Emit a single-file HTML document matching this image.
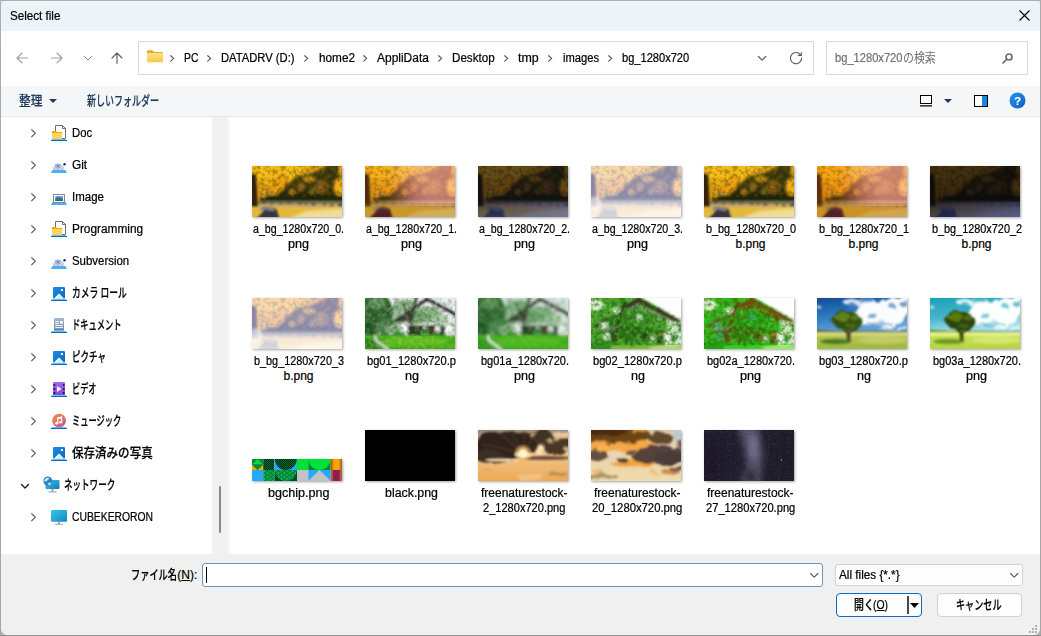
<!DOCTYPE html>
<html lang="ja">
<head>
<meta charset="utf-8">
<title>Select file</title>
<style>
*{box-sizing:border-box;margin:0;padding:0}
html,body{width:1041px;height:636px;overflow:hidden;background:#a6a6a6}
body{background:linear-gradient(#adadad,#a6a6a6 50%,#a6a6a6 99.8%,#909090 99.85%)}
#under{position:absolute;left:1px;top:1px;width:1039px;height:634px;background:linear-gradient(#e8e8e8,#e8e8e8 50%,#b4b4b4 50%)}
body{font-family:"Liberation Sans","Noto Sans CJK JP",sans-serif;font-size:12px;color:#000;position:relative}
#win{position:absolute;left:1px;top:1px;width:1039px;height:634px;background:#fff;border-radius:7px;overflow:hidden}
#title{position:absolute;left:0;top:0;width:1039px;height:30px;background:#ebf4f8;border-top:1px solid #f0fbfd}
#tool{position:absolute;left:0;top:85px;width:1039px;height:31px;background:#f4f6f8;border-bottom:1px solid #e6e6e6}
#nav{position:absolute;left:0;top:116px;width:211px;height:437px;background:#fff}
#split{position:absolute;left:211px;top:116px;width:16px;height:437px;background:#f0f0f0}
#split i{position:absolute;left:7px;top:369px;width:2px;height:47px;background:#8a8a8a;border-radius:1px}
#content{position:absolute;left:227px;top:116px;width:812px;height:437px;background:#fff;border-left:3px solid #fafafa}
#foot{position:absolute;left:0;top:553px;width:1039px;height:81px;background:#f0f0f0;border-bottom:1px solid #f5f5f5}
.txt{position:absolute;white-space:nowrap;line-height:14px;font-size:12px;transform-origin:0 0;display:block;-webkit-text-stroke:0.22px currentColor}
.box{position:absolute;background:#fff;border:1px solid #d9d9d9}
svg{position:absolute;overflow:visible}
.th{position:absolute;width:90px;height:51px;box-shadow:1px 1px 2.5px rgba(0,0,0,.36)}
.th{overflow:hidden;isolation:isolate}.th svg{left:0;top:0;overflow:hidden}
.btn{position:absolute;background:#fdfdfd;border:1px solid #d0d0d0;border-radius:4px}
u{text-decoration:underline}
.cj{font-size:13px}
</style>
</head>
<body>
<div id="under"></div>
<div id="win">
<svg width="0" height="0" style="position:absolute"><defs>
<filter id="b1" x="-20%" y="-20%" width="140%" height="140%"><feGaussianBlur stdDeviation="0.8"/></filter>
<filter id="b2" x="-20%" y="-20%" width="140%" height="140%"><feGaussianBlur stdDeviation="1.6"/></filter>
<filter id="b3" x="-30%" y="-30%" width="160%" height="160%"><feGaussianBlur stdDeviation="3"/></filter>
<filter id="b5" x="-40%" y="-40%" width="180%" height="180%"><feGaussianBlur stdDeviation="5"/></filter>
<filter id="c2" x="-20%" y="-20%" width="140%" height="140%"><feTurbulence type="fractalNoise" baseFrequency="0.07" numOctaves="3" seed="11" result="n"/><feDisplacementMap in="SourceGraphic" in2="n" scale="9" xChannelSelector="R" yChannelSelector="G"/><feGaussianBlur stdDeviation="0.9"/></filter>
<filter id="c3" x="-20%" y="-20%" width="140%" height="140%"><feTurbulence type="fractalNoise" baseFrequency="0.06" numOctaves="3" seed="5" result="n"/><feDisplacementMap in="SourceGraphic" in2="n" scale="12" xChannelSelector="G" yChannelSelector="R"/><feGaussianBlur stdDeviation="1.3"/></filter>
<filter id="leaf" x="0" y="0" width="100%" height="100%"><feTurbulence type="fractalNoise" baseFrequency="0.2" numOctaves="3" seed="7" result="n"/><feColorMatrix in="n" type="matrix" values="0 0 0 0 0  0 0 0 0 0  0 0 0 0 0  3.2 0 0 0 -1.35" result="a"/><feComposite in="SourceGraphic" in2="a" operator="in"/></filter>
<filter id="leaf2" x="0" y="0" width="100%" height="100%"><feTurbulence type="fractalNoise" baseFrequency="0.24" numOctaves="3" seed="23" result="n"/><feColorMatrix in="n" type="matrix" values="0 0 0 0 0  0 0 0 0 0  0 0 0 0 0  0 3.4 0 0 -1.45" result="a"/><feComposite in="SourceGraphic" in2="a" operator="in"/></filter>
<filter id="stars" x="0" y="0" width="100%" height="100%"><feTurbulence type="fractalNoise" baseFrequency="0.9" numOctaves="1" seed="3" result="n"/><feColorMatrix in="n" type="matrix" values="0 0 0 0 0.75  0 0 0 0 0.75  0 0 0 0 0.9  0 0 3 0 -1.75"/></filter>
<linearGradient id="aground" x1="0" y1="0" x2="1" y2="1"><stop offset="0" stop-color="#e6b228"/><stop offset="1" stop-color="#ecd47c"/></linearGradient>
<linearGradient id="a1s" x1="0" y1="0" x2="1" y2="0"><stop offset="0.2" stop-color="#000000"/><stop offset="0.55" stop-color="#7a2a3c"/><stop offset="1" stop-color="#8a3444"/></linearGradient>
<linearGradient id="a1w" x1="0" y1="0" x2="1" y2="0"><stop offset="0.3" stop-color="#ffd8c8" stop-opacity="0"/><stop offset="0.7" stop-color="#ffd8c8" stop-opacity="0.3"/><stop offset="1" stop-color="#ffd0c0" stop-opacity="0.25"/></linearGradient>
<linearGradient id="a3w" x1="0" y1="0" x2="0" y2="1"><stop offset="0" stop-color="#fff" stop-opacity="0.4"/><stop offset="0.6" stop-color="#fff" stop-opacity="0.44"/><stop offset="0.8" stop-color="#fffaf0" stop-opacity="0.72"/><stop offset="1" stop-color="#fffdf4" stop-opacity="0.8"/></linearGradient>
<linearGradient id="a2b" x1="0" y1="0" x2="1" y2="1"><stop offset="0" stop-color="#000"/><stop offset="1" stop-color="#203070"/></linearGradient>
<linearGradient id="a1o" x1="0" y1="0" x2="1" y2="0"><stop offset="0.25" stop-color="#f08a50" stop-opacity="0.12"/><stop offset="0.6" stop-color="#e88a70" stop-opacity="0.62"/><stop offset="1" stop-color="#f09a78" stop-opacity="0.7"/></linearGradient>
<linearGradient id="a3o" x1="0" y1="0" x2="0" y2="1"><stop offset="0" stop-color="#f4e8ea" stop-opacity="0.5"/><stop offset="0.65" stop-color="#e8e4f6" stop-opacity="0.62"/><stop offset="0.8" stop-color="#fffaf0" stop-opacity="0.8"/><stop offset="1" stop-color="#fffdf4" stop-opacity="0.82"/></linearGradient>
<g id="autumn">
 <rect x="-5" y="-5" width="100" height="61" fill="#dc9c12"/>
 <g filter="url(#b2)">
  <ellipse cx="20" cy="5" rx="32" ry="11" fill="#f6ba18"/>
  <ellipse cx="28" cy="20" rx="13" ry="10" fill="#e89a0e"/>
  <ellipse cx="21" cy="32" rx="5" ry="3.5" fill="#dca41a"/>
  <ellipse cx="16" cy="29" rx="2.5" ry="6" fill="#6a5a30"/>
 </g>
 <rect x="0" y="0" width="90" height="33" fill="#fac824" filter="url(#leaf)" opacity=".6"/>
 <g filter="url(#b2)">
  <path d="M34 19L46 10L60 7L72 2L78 -3L96 -3L96 36L22 36L30 27z" fill="#3c380a"/>
  <ellipse cx="58" cy="28" rx="32" ry="6" fill="#1e2008"/>
  <ellipse cx="69" cy="21" rx="7" ry="7" fill="#7a5418"/>
  <ellipse cx="49" cy="21" rx="3.5" ry="4.5" fill="#86621a"/>
  <ellipse cx="60" cy="25" rx="3" ry="3" fill="#6a6614"/>
  <ellipse cx="57" cy="13" rx="6" ry="3" fill="#c08a14"/>
  <ellipse cx="81" cy="5" rx="5" ry="7" fill="#34360e"/>
  <ellipse cx="89.500000" cy="4" rx="3" ry="6" fill="#deac1c"/>
  <ellipse cx="88" cy="21" rx="6" ry="9" fill="#f0b018"/>
  <ellipse cx="40" cy="26" rx="3" ry="2" fill="#c4941a"/>
  <ellipse cx="30" cy="32.500000" rx="16" ry="3.500000" fill="#2a2c0a"/>
 </g>
 <rect x="30" y="0" width="60" height="33" fill="#e8b020" filter="url(#leaf)" opacity=".16"/>
 <rect x="0" y="0" width="90" height="33" fill="#2e2a06" filter="url(#leaf2)" opacity=".34"/>
 <g filter="url(#b1)">
  <rect x="8" y="31.500000" width="87" height="4" fill="#1e220a"/>
  <rect x="-5" y="35" width="100" height="3.200000" fill="#70764a"/>
  <rect x="-5" y="38" width="100" height="3.400000" fill="#c8a46c"/>
  <rect x="-5" y="41" width="100" height="15" fill="#e4b83c"/>
  <path d="M-5 8h9l2 33H-5z" fill="#32200e"/>
  <rect x="10.500000" y="32" width="3" height="6" fill="#5a4020"/>
  <g fill="#4c4c58"><rect x="18" y="36.500000" width="3" height="2"/><rect x="27" y="36.300000" width="3.500000" height="2"/><rect x="35" y="36.200000" width="4.500000" height="2"/><rect x="46" y="36.800000" width="4" height="2"/><rect x="52.500000" y="37" width="3" height="2"/><rect x="59" y="37.200000" width="4.500000" height="2.200000"/><rect x="71" y="37.500000" width="3" height="2"/><rect x="78" y="38.500000" width="3.500000" height="2"/><rect x="86" y="37.800000" width="6" height="3"/></g>
 </g>
 <path d="M26 58L54 45L97 41.500000L97 58z" fill="#f0dc94" filter="url(#b2)"/>
 <g filter="url(#b1)">
  <path d="M7.500000 44.500000l2-4 4-.5 4 2 1 3z" fill="#8c8a88"/>
  <path d="M1 56l8-8 4-5 5-2 6.500000 2 4 13z" fill="#34363e"/>
  <path d="M13 44l5-2.500000 5 2-1 1.500000z" fill="#8a8a92"/>
 </g>
</g>
</defs></svg>
<div id="title"></div>
<span id="t0" class="txt " style="left:9.0px;top:8.0px;transform:scaleX(0.9686);">Select file</span>
<svg style="left:1018.0px;top:9.0px" width="11" height="11" viewBox="0 0 11 11"><path d="M0.5 0.5L10.5 10.5M10.5 0.5L0.5 10.5" stroke="#000" stroke-width="1.1" fill="none"/></svg>
<svg style="left:15.0px;top:51.0px" width="12" height="12" viewBox="0 0 12 12"><path d="M11.5 6H1M6 1L1 6l5 5" stroke="#a0a0a0" stroke-width="1.1" fill="none" stroke-linecap="round" stroke-linejoin="round"/></svg>
<svg style="left:50.0px;top:51.0px" width="12" height="12" viewBox="0 0 12 12"><path d="M0.5 6H11M6 1l5 5-5 5" stroke="#a0a0a0" stroke-width="1.1" fill="none" stroke-linecap="round" stroke-linejoin="round"/></svg>
<svg style="left:82.5px;top:54.5px" width="8" height="5" viewBox="0 0 8 5"><path d="M0.5 0.5L4 4L7.5 0.5" stroke="#8a8a8a" stroke-width="1" fill="none" stroke-linecap="round" stroke-linejoin="round"/></svg>
<svg style="left:110.0px;top:51.0px" width="12" height="12" viewBox="0 0 12 12"><path d="M6 11.5V1M1 6l5-5 5 5" stroke="#5a5a5a" stroke-width="1.1" fill="none" stroke-linecap="round" stroke-linejoin="round"/></svg>
<div class="box" style="left:137px;top:40px;width:676px;height:34px"></div>
<div class="box" style="left:825px;top:40px;width:202px;height:34px"></div>
<svg style="left:145.5px;top:49.0px" width="16" height="12.5" viewBox="0 0 17 13"><defs><linearGradient id="fg" x1="0" y1="0" x2="0" y2="1"><stop offset="0" stop-color="#ffe08a"/><stop offset="1" stop-color="#f8c84a"/></linearGradient></defs><path d="M0 1.5Q0 0 1.5 0H5.5L7.5 2H15.5Q17 2 17 3.5V5H0z" fill="#e8a920"/><rect x="0" y="3" width="17" height="10" rx="1.3" fill="url(#fg)"/></svg>
<span id="t1" class="txt " style="left:183.1px;top:50.0px;transform:scaleX(0.8637);">PC</span>
<span id="t2" class="txt " style="left:220.3px;top:50.0px;transform:scaleX(0.9343);">DATADRV (D:)</span>
<span id="t3" class="txt " style="left:317.7px;top:50.0px;transform:scaleX(0.9808);">home2</span>
<span id="t4" class="txt " style="left:375.9px;top:50.0px;transform:scaleX(0.9975);">AppliData</span>
<span id="t5" class="txt " style="left:451.3px;top:50.0px;transform:scaleX(0.9675);">Desktop</span>
<span id="t6" class="txt " style="left:517.0px;top:50.0px;transform:scaleX(1.0342);">tmp</span>
<span id="t7" class="txt " style="left:561.6px;top:50.0px;transform:scaleX(0.9331);">images</span>
<span id="t8" class="txt " style="left:621.3px;top:50.0px;transform:scaleX(0.9237);">bg_1280x720</span>
<svg style="left:169.1px;top:53.8px" width="4.4" height="6.8" viewBox="0 0 4.4 6.8"><path d="M0.7 0.7L3.7 3.4L0.7 6.1" stroke="#5a5a5a" stroke-width="1.2" fill="none" stroke-linecap="round" stroke-linejoin="round"/></svg>
<svg style="left:205.9px;top:53.8px" width="4.4" height="6.8" viewBox="0 0 4.4 6.8"><path d="M0.7 0.7L3.7 3.4L0.7 6.1" stroke="#5a5a5a" stroke-width="1.2" fill="none" stroke-linecap="round" stroke-linejoin="round"/></svg>
<svg style="left:302.5px;top:53.8px" width="4.4" height="6.8" viewBox="0 0 4.4 6.8"><path d="M0.7 0.7L3.7 3.4L0.7 6.1" stroke="#5a5a5a" stroke-width="1.2" fill="none" stroke-linecap="round" stroke-linejoin="round"/></svg>
<svg style="left:362.1px;top:53.8px" width="4.4" height="6.8" viewBox="0 0 4.4 6.8"><path d="M0.7 0.7L3.7 3.4L0.7 6.1" stroke="#5a5a5a" stroke-width="1.2" fill="none" stroke-linecap="round" stroke-linejoin="round"/></svg>
<svg style="left:436.7px;top:53.8px" width="4.4" height="6.8" viewBox="0 0 4.4 6.8"><path d="M0.7 0.7L3.7 3.4L0.7 6.1" stroke="#5a5a5a" stroke-width="1.2" fill="none" stroke-linecap="round" stroke-linejoin="round"/></svg>
<svg style="left:502.9px;top:53.8px" width="4.4" height="6.8" viewBox="0 0 4.4 6.8"><path d="M0.7 0.7L3.7 3.4L0.7 6.1" stroke="#5a5a5a" stroke-width="1.2" fill="none" stroke-linecap="round" stroke-linejoin="round"/></svg>
<svg style="left:547.0px;top:53.8px" width="4.4" height="6.8" viewBox="0 0 4.4 6.8"><path d="M0.7 0.7L3.7 3.4L0.7 6.1" stroke="#5a5a5a" stroke-width="1.2" fill="none" stroke-linecap="round" stroke-linejoin="round"/></svg>
<svg style="left:606.7px;top:53.8px" width="4.4" height="6.8" viewBox="0 0 4.4 6.8"><path d="M0.7 0.7L3.7 3.4L0.7 6.1" stroke="#5a5a5a" stroke-width="1.2" fill="none" stroke-linecap="round" stroke-linejoin="round"/></svg>
<svg style="left:757.0px;top:54.6px" width="8.2" height="5.1" viewBox="0 0 8.2 5.1"><path d="M0.5 0.5L4.1 4.1L7.7 0.5" stroke="#5a5a5a" stroke-width="1.15" fill="none" stroke-linecap="round" stroke-linejoin="round"/></svg>
<svg style="left:788.0px;top:50.0px" width="14" height="14" viewBox="0 0 14 14"><path d="M11.8 4.2A5.6 5.6 0 1 0 12.6 7" stroke="#5a5a5a" stroke-width="1.1" fill="none" stroke-linecap="round"/><path d="M12.3 1.5V4.4H9.3" stroke="#5a5a5a" stroke-width="1.1" fill="none" stroke-linecap="round" stroke-linejoin="round"/></svg>
<span id="t9" class="txt " style="left:834.4px;top:50.0px;color:#707070;transform:scaleX(0.9278);">bg_1280x720</span>
<span id="t10" class="txt " style="left:902.2px;top:50.0px;color:#707070;transform:scaleX(0.8407);-webkit-text-stroke:0;"><span class="cj">の検索</span></span>
<svg style="left:1000.0px;top:50.0px" width="13" height="14" viewBox="0 0 13 14"><circle cx="8" cy="6" r="3" stroke="#6c6c6c" stroke-width="1.7" fill="none"/><path d="M5.6 8.4L1.5 12.5" stroke="#6c6c6c" stroke-width="1.7" stroke-linecap="butt"/></svg>
<div id="tool"></div>
<span id="t11" class="txt " style="left:18.2px;top:93.0px;color:#1e395b;transform:scaleX(0.9033);font-weight:500;"><span class="cj">整理</span></span>
<svg style="left:48.0px;top:98.3px" width="8" height="4" viewBox="0 0 8 4"><path d="M0 0h8L4 4z" fill="#1e395b"/></svg>
<span id="t12" class="txt " style="left:86.4px;top:93.0px;color:#1e395b;transform:scaleX(0.6932);font-weight:500;"><span class="cj">新しいフォルダー</span></span>
<svg style="left:919.0px;top:94.0px" width="12" height="12" viewBox="0 0 12 12"><rect x="0.5" y="0.5" width="11" height="8" fill="#fff" stroke="#000" stroke-width="1"/><path d="M0 10.9H12" stroke="#000" stroke-width="1.3"/></svg>
<svg style="left:942.5px;top:98.3px" width="8" height="4" viewBox="0 0 8 4"><path d="M0 0h8L4 4z" fill="#1e395b"/></svg>
<svg style="left:973.0px;top:94.0px" width="14" height="12" viewBox="0 0 14 12"><rect x="0.5" y="0.5" width="13" height="11" fill="#fff" stroke="#000" stroke-width="1"/><rect x="8" y="1" width="5" height="10" fill="#1c84e4"/></svg>
<svg style="left:1007.5px;top:91.4px" width="17" height="17" viewBox="0 0 17 17"><defs><linearGradient id="hg" x1="0" y1="0" x2="1" y2="1"><stop offset="0" stop-color="#2a92ea"/><stop offset="1" stop-color="#0a62be"/></linearGradient></defs><circle cx="8.5" cy="8.5" r="8" fill="url(#hg)"/><text x="8.5" y="12.6" font-family="Liberation Sans,sans-serif" font-size="11.5" font-weight="bold" fill="#fff" text-anchor="middle">?</text></svg>
<div id="nav"></div><div id="split"><i></i></div><div id="content"></div>
<svg style="left:30.0px;top:128.0px" width="5" height="8.5" viewBox="0 0 5 8.5"><path d="M0.7 0.7L4.3 4.25L0.7 7.8" stroke="#6a6a6a" stroke-width="1.2" fill="none" stroke-linecap="round" stroke-linejoin="round"/></svg>
<svg style="left:50.0px;top:124.0px" width="16" height="16" viewBox="0 0 16 16"><path d="M4.5 0.5H11.5L14.5 3.5V13.5H4.5z" fill="#fcfcfc" stroke="#707070" stroke-width="1"/><path d="M11.5 0.5V3.5H14.5" fill="none" stroke="#707070" stroke-width="1"/><path d="M1 6H4.8L5.8 7H11V14H1z" fill="#f0a800"/><rect x="1" y="8" width="10" height="6" fill="#fcd264"/><rect x="1" y="14" width="14" height="1" fill="#5cc6f8"/><rect x="0" y="15" width="16" height="1" fill="#0a68c8"/></svg>
<span id="t13" class="txt " style="left:71.1px;top:125.0px;transform:scaleX(0.9417);">Doc</span>
<svg style="left:30.0px;top:160.0px" width="5" height="8.5" viewBox="0 0 5 8.5"><path d="M0.7 0.7L4.3 4.25L0.7 7.8" stroke="#6a6a6a" stroke-width="1.2" fill="none" stroke-linecap="round" stroke-linejoin="round"/></svg>
<svg style="left:50.0px;top:156.0px" width="16" height="16" viewBox="0 0 16 16"><path d="M1.5 13H14.5L16 16H0z" fill="#44b2f8"/><ellipse cx="7.5" cy="11.2" rx="6" ry="1.9" fill="#cfcfd4"/><path d="M10 10.5L13.2 7.8" stroke="#d8d8dc" stroke-width="1.6"/><ellipse cx="7" cy="9" rx="3.3" ry="2.4" fill="#a2b0ec"/><ellipse cx="7" cy="9" rx="1.3" ry=".8" fill="#6a76b4"/><circle cx="13.6" cy="7.3" r="1.2" fill="#123c66"/><path d="M3.5 12L2.5 13.5M11 12L12 13.5M6.5 12.5V13.8" stroke="#a8a8b0" stroke-width="1.2"/></svg>
<span id="t14" class="txt " style="left:70.6px;top:157.0px;transform:scaleX(0.9841);">Git</span>
<svg style="left:30.0px;top:192.0px" width="5" height="8.5" viewBox="0 0 5 8.5"><path d="M0.7 0.7L4.3 4.25L0.7 7.8" stroke="#6a6a6a" stroke-width="1.2" fill="none" stroke-linecap="round" stroke-linejoin="round"/></svg>
<svg style="left:50.0px;top:188.0px" width="16" height="16" viewBox="0 0 16 16"><path d="M1.5 13H14.5L16 16H0z" fill="#44b2f8"/><rect x="2.5" y="5.5" width="11" height="8" fill="#fff" stroke="#8a8a8a"/><rect x="4.3" y="7.2" width="7.6" height="4.8" fill="#4a88f0"/><path d="M4.3 10.4L6 8.6 11.9 10v1.2H4.3z" fill="#3c7a48"/><rect x="4.3" y="11" width="7.6" height="1" fill="#2c5c9c"/></svg>
<span id="t15" class="txt " style="left:71.1px;top:189.0px;transform:scaleX(0.9563);">Image</span>
<svg style="left:30.0px;top:224.0px" width="5" height="8.5" viewBox="0 0 5 8.5"><path d="M0.7 0.7L4.3 4.25L0.7 7.8" stroke="#6a6a6a" stroke-width="1.2" fill="none" stroke-linecap="round" stroke-linejoin="round"/></svg>
<svg style="left:50.0px;top:220.0px" width="16" height="16" viewBox="0 0 16 16"><path d="M4.5 0.5H11.5L14.5 3.5V13.5H4.5z" fill="#fcfcfc" stroke="#707070" stroke-width="1"/><path d="M11.5 0.5V3.5H14.5" fill="none" stroke="#707070" stroke-width="1"/><path d="M1 6H4.8L5.8 7H11V14H1z" fill="#f0a800"/><rect x="1" y="8" width="10" height="6" fill="#fcd264"/><rect x="1" y="14" width="14" height="1" fill="#5cc6f8"/><rect x="0" y="15" width="16" height="1" fill="#0a68c8"/></svg>
<span id="t16" class="txt " style="left:71.1px;top:221.0px;transform:scaleX(0.9885);">Programming</span>
<svg style="left:30.0px;top:256.0px" width="5" height="8.5" viewBox="0 0 5 8.5"><path d="M0.7 0.7L4.3 4.25L0.7 7.8" stroke="#6a6a6a" stroke-width="1.2" fill="none" stroke-linecap="round" stroke-linejoin="round"/></svg>
<svg style="left:50.0px;top:252.0px" width="16" height="16" viewBox="0 0 16 16"><path d="M1.5 13H14.5L16 16H0z" fill="#44b2f8"/><ellipse cx="7.5" cy="11.2" rx="6" ry="1.9" fill="#cfcfd4"/><path d="M10 10.5L13.2 7.8" stroke="#d8d8dc" stroke-width="1.6"/><ellipse cx="7" cy="9" rx="3.3" ry="2.4" fill="#a2b0ec"/><ellipse cx="7" cy="9" rx="1.3" ry=".8" fill="#6a76b4"/><circle cx="13.6" cy="7.3" r="1.2" fill="#123c66"/><path d="M3.5 12L2.5 13.5M11 12L12 13.5M6.5 12.5V13.8" stroke="#a8a8b0" stroke-width="1.2"/></svg>
<span id="t17" class="txt " style="left:70.9px;top:253.0px;transform:scaleX(0.9526);">Subversion</span>
<svg style="left:30.0px;top:288.0px" width="5" height="8.5" viewBox="0 0 5 8.5"><path d="M0.7 0.7L4.3 4.25L0.7 7.8" stroke="#6a6a6a" stroke-width="1.2" fill="none" stroke-linecap="round" stroke-linejoin="round"/></svg>
<svg style="left:50.0px;top:284.0px" width="16" height="16" viewBox="0 0 16 16"><defs><linearGradient id="pg" x1="0" y1="0" x2="1" y2="1"><stop offset="0" stop-color="#1e90e4"/><stop offset="1" stop-color="#0c62c0"/></linearGradient></defs><rect x="2" y="2" width="12" height="11.4" rx="1.2" fill="url(#pg)"/><path d="M3 13.6L8 8.4 13 13.6z" fill="#fff"/><path d="M4.6 13.6L8 10.4 11.4 13.6z" fill="#dceefc"/><rect x="10" y="4" width="2" height="2" fill="#fff"/><rect x="1" y="14" width="14" height="1" fill="#5cc6f8"/><rect x="0" y="15" width="16" height="1" fill="#0a68c8"/></svg>
<span id="t18" class="txt " style="left:71.1px;top:285.0px;transform:scaleX(0.6722);font-weight:500;"><span class="cj">カメラ</span> <span class="cj">ロール</span></span>
<svg style="left:30.0px;top:320.0px" width="5" height="8.5" viewBox="0 0 5 8.5"><path d="M0.7 0.7L4.3 4.25L0.7 7.8" stroke="#6a6a6a" stroke-width="1.2" fill="none" stroke-linecap="round" stroke-linejoin="round"/></svg>
<svg style="left:50.0px;top:316.0px" width="16" height="16" viewBox="0 0 16 16"><defs><linearGradient id="dg" x1="0" y1="0" x2="0" y2="1"><stop offset="0" stop-color="#a6bad2"/><stop offset="1" stop-color="#6882a2"/></linearGradient></defs><rect x="3" y="1" width="10" height="12.7" rx="1" fill="url(#dg)"/><path d="M4.2 4.6h3.8M4.2 6.6h3.8M4.2 8.6h7.8M4.2 10.6h7.8" stroke="#fff" stroke-width="1"/><rect x="9" y="4" width="2.8" height="2.8" fill="#fff"/><rect x="1" y="14" width="14" height="1" fill="#5cc6f8"/><rect x="0" y="15" width="16" height="1" fill="#0a68c8"/></svg>
<span id="t19" class="txt " style="left:71.1px;top:317.0px;transform:scaleX(0.6358);font-weight:500;"><span class="cj">ドキュメント</span></span>
<svg style="left:30.0px;top:352.0px" width="5" height="8.5" viewBox="0 0 5 8.5"><path d="M0.7 0.7L4.3 4.25L0.7 7.8" stroke="#6a6a6a" stroke-width="1.2" fill="none" stroke-linecap="round" stroke-linejoin="round"/></svg>
<svg style="left:50.0px;top:348.0px" width="16" height="16" viewBox="0 0 16 16"><defs><linearGradient id="pg" x1="0" y1="0" x2="1" y2="1"><stop offset="0" stop-color="#1e90e4"/><stop offset="1" stop-color="#0c62c0"/></linearGradient></defs><rect x="2" y="2" width="12" height="11.4" rx="1.2" fill="url(#pg)"/><path d="M3 13.6L8 8.4 13 13.6z" fill="#fff"/><path d="M4.6 13.6L8 10.4 11.4 13.6z" fill="#dceefc"/><rect x="10" y="4" width="2" height="2" fill="#fff"/><rect x="1" y="14" width="14" height="1" fill="#5cc6f8"/><rect x="0" y="15" width="16" height="1" fill="#0a68c8"/></svg>
<span id="t20" class="txt " style="left:71.1px;top:349.0px;transform:scaleX(0.6535);font-weight:500;"><span class="cj">ピクチャ</span></span>
<svg style="left:30.0px;top:384.0px" width="5" height="8.5" viewBox="0 0 5 8.5"><path d="M0.7 0.7L4.3 4.25L0.7 7.8" stroke="#6a6a6a" stroke-width="1.2" fill="none" stroke-linecap="round" stroke-linejoin="round"/></svg>
<svg style="left:50.0px;top:380.0px" width="16" height="16" viewBox="0 0 16 16"><defs><linearGradient id="vg" x1="0" y1="0" x2="0" y2="1"><stop offset="0" stop-color="#a466f2"/><stop offset="1" stop-color="#8e44de"/></linearGradient></defs><rect x="2" y="1" width="12" height="13.4" rx="1.2" fill="url(#vg)"/><g fill="#2a1450"><rect x="2.6" y="3" width="1.6" height="2"/><rect x="2.6" y="7" width="1.6" height="2"/><rect x="2.6" y="11" width="1.6" height="2"/><rect x="11.9" y="3" width="1.6" height="2"/><rect x="11.9" y="7" width="1.6" height="2"/><rect x="11.9" y="11" width="1.6" height="2"/></g><path d="M6 5L10.6 8 6 11z" fill="#f4f4f0"/><rect x="1" y="14" width="14" height="1" fill="#5cc6f8"/><rect x="0" y="15" width="16" height="1" fill="#0a68c8"/></svg>
<span id="t21" class="txt " style="left:71.1px;top:381.0px;transform:scaleX(0.6280);font-weight:500;"><span class="cj">ビデオ</span></span>
<svg style="left:30.0px;top:416.0px" width="5" height="8.5" viewBox="0 0 5 8.5"><path d="M0.7 0.7L4.3 4.25L0.7 7.8" stroke="#6a6a6a" stroke-width="1.2" fill="none" stroke-linecap="round" stroke-linejoin="round"/></svg>
<svg style="left:50.0px;top:412.0px" width="16" height="16" viewBox="0 0 16 16"><defs><linearGradient id="mg" x1="0.1" y1="0.1" x2="0.9" y2="0.9"><stop offset="0" stop-color="#f28a44"/><stop offset="0.6" stop-color="#e0686c"/><stop offset="1" stop-color="#b85cb0"/></linearGradient></defs><rect x="1" y="14" width="14" height="1" fill="#5cc6f8"/><rect x="0" y="15" width="16" height="1" fill="#0a68c8"/><circle cx="8.1" cy="7.7" r="6.9" fill="url(#mg)"/><path d="M6.7 10.2V5L10.6 4V9.2" stroke="#fff" stroke-width="1.3" fill="none"/><path d="M6.7 5.6L10.6 4.6" stroke="#fff" stroke-width="1.6"/><ellipse cx="5.7" cy="10.3" rx="1.5" ry="1.2" fill="#fff"/><ellipse cx="9.6" cy="9.3" rx="1.5" ry="1.2" fill="#fff"/></svg>
<span id="t22" class="txt " style="left:70.9px;top:413.0px;transform:scaleX(0.6341);font-weight:500;"><span class="cj">ミュージック</span></span>
<svg style="left:30.0px;top:448.0px" width="5" height="8.5" viewBox="0 0 5 8.5"><path d="M0.7 0.7L4.3 4.25L0.7 7.8" stroke="#6a6a6a" stroke-width="1.2" fill="none" stroke-linecap="round" stroke-linejoin="round"/></svg>
<svg style="left:50.0px;top:444.0px" width="16" height="16" viewBox="0 0 16 16"><defs><linearGradient id="pg" x1="0" y1="0" x2="1" y2="1"><stop offset="0" stop-color="#1e90e4"/><stop offset="1" stop-color="#0c62c0"/></linearGradient></defs><rect x="2" y="2" width="12" height="11.4" rx="1.2" fill="url(#pg)"/><path d="M3 13.6L8 8.4 13 13.6z" fill="#fff"/><path d="M4.6 13.6L8 10.4 11.4 13.6z" fill="#dceefc"/><rect x="10" y="4" width="2" height="2" fill="#fff"/><rect x="1" y="14" width="14" height="1" fill="#5cc6f8"/><rect x="0" y="15" width="16" height="1" fill="#0a68c8"/></svg>
<span id="t23" class="txt " style="left:70.9px;top:445.0px;transform:scaleX(0.8867);font-weight:500;"><span class="cj">保存済みの写真</span></span>
<svg style="left:20.3px;top:482.5px" width="8" height="5" viewBox="0 0 8 5"><path d="M0.5 0.5L4 4L7.5 0.5" stroke="#1a1a1a" stroke-width="1.3" fill="none" stroke-linecap="round" stroke-linejoin="round"/></svg>
<svg style="left:41.5px;top:476.0px" width="17" height="16" viewBox="0 0 17 16"><defs><linearGradient id="ng" x1="0" y1="0" x2="1" y2="1"><stop offset="0" stop-color="#38c0e4"/><stop offset="1" stop-color="#167cbc"/></linearGradient></defs><rect x="2.5" y="3" width="14" height="9" rx="1" fill="url(#ng)"/><rect x="8.6" y="12" width="1.8" height="2.6" fill="#8a9aa8"/><rect x="5.5" y="14.4" width="8" height="1.1" fill="#9aa8b4"/><circle cx="4.8" cy="4" r="4.5" fill="#2a84c8"/><path d="M1.3 3q1.5-2.800000 4.500000-2.200000 .8 1.200000-1 2.200000-1.500000 1.800000-3.500000 1.300000z" fill="#d4ecf8"/><path d="M4.500000 6.500000q2.500000-1.500000 4-.5-.5 2-2.500000 2.500000z" fill="#a8d8f0"/></svg>
<span id="t24" class="txt " style="left:63.1px;top:477.0px;transform:scaleX(0.6563);font-weight:500;"><span class="cj">ネットワーク</span></span>
<svg style="left:30.0px;top:512.0px" width="5" height="8.5" viewBox="0 0 5 8.5"><path d="M0.7 0.7L4.3 4.25L0.7 7.8" stroke="#6a6a6a" stroke-width="1.2" fill="none" stroke-linecap="round" stroke-linejoin="round"/></svg>
<svg style="left:50.0px;top:508.0px" width="17" height="16" viewBox="0 0 17 16"><defs><linearGradient id="cg" x1="0" y1="0" x2="1" y2="1"><stop offset="0" stop-color="#34cce4"/><stop offset="1" stop-color="#1686c0"/></linearGradient></defs><rect x="0" y="1" width="16" height="11.8" rx="1.2" fill="url(#cg)"/><rect x="7.1" y="12.8" width="1.8" height="2.2" fill="#8a9aa8"/><rect x="4" y="14.8" width="8" height="1" fill="#9aa8b4"/></svg>
<span id="t25" class="txt " style="left:70.9px;top:509.0px;transform:scaleX(0.8626);">CUBEKERORON</span>
<div class="th" style="left:251px;top:165px;width:90px;height:51px"><svg width="90" height="51" viewBox="0 0 90 51"><use href="#autumn"/></svg></div>
<span id="t26" class="txt " style="left:252.0px;top:221.0px;transform:scaleX(0.8854);">a_bg_1280x720_0.</span>
<span id="t27" class="txt " style="left:287.0px;top:236.0px;transform:scaleX(1.0484);">png</span>
<div class="th" style="left:364px;top:165px;width:90px;height:51px"><svg width="90" height="51" viewBox="0 0 90 51"><use href="#autumn"/><rect width="90" height="51" fill="#f07010" opacity=".16"/><rect width="90" height="40" fill="url(#a1s)" style="mix-blend-mode:screen"/><rect width="90" height="40" fill="url(#a1w)"/><rect y="37" width="90" height="14" fill="#8a6a08" opacity=".3"/><path d="M1 56l8-8 4-5 5-2 6.500000 2 4 13z" fill="#4a1828" opacity=".75" filter="url(#b1)"/></svg></div>
<span id="t28" class="txt " style="left:365.0px;top:221.0px;transform:scaleX(0.8854);">a_bg_1280x720_1.</span>
<span id="t29" class="txt " style="left:400.0px;top:236.0px;transform:scaleX(1.0484);">png</span>
<div class="th" style="left:477px;top:165px;width:90px;height:51px"><svg width="90" height="51" viewBox="0 0 90 51"><use href="#autumn"/><rect width="90" height="51" fill="#080612" opacity=".62"/><rect y="36" width="90" height="15" fill="url(#a2b)" style="mix-blend-mode:screen"/></svg></div>
<span id="t30" class="txt " style="left:478.0px;top:221.0px;transform:scaleX(0.8854);">a_bg_1280x720_2.</span>
<span id="t31" class="txt " style="left:513.0px;top:236.0px;transform:scaleX(1.0484);">png</span>
<div class="th" style="left:590px;top:165px;width:90px;height:51px"><svg width="90" height="51" viewBox="0 0 90 51"><use href="#autumn"/><rect width="90" height="51" fill="#0a0a5c" style="mix-blend-mode:screen"/><rect width="90" height="51" fill="url(#a3w)"/><ellipse cx="4" cy="38" rx="7" ry="8" fill="#fff" opacity=".45" filter="url(#b2)"/></svg></div>
<span id="t32" class="txt " style="left:591.0px;top:221.0px;transform:scaleX(0.8854);">a_bg_1280x720_3.</span>
<span id="t33" class="txt " style="left:626.0px;top:236.0px;transform:scaleX(1.0484);">png</span>
<div class="th" style="left:703px;top:165px;width:90px;height:51px"><svg width="90" height="51" viewBox="0 0 90 51"><use href="#autumn"/></svg></div>
<span id="t34" class="txt " style="left:704.5px;top:221.0px;transform:scaleX(0.9051);">b_bg_1280x720_0</span>
<span id="t35" class="txt " style="left:734.5px;top:236.0px;">b.png</span>
<div class="th" style="left:816px;top:165px;width:90px;height:51px"><svg width="90" height="51" viewBox="0 0 90 51"><use href="#autumn"/><rect width="90" height="51" fill="#f06008" opacity=".24"/><rect width="90" height="40" fill="url(#a1s)" style="mix-blend-mode:screen"/><rect width="90" height="40" fill="url(#a1w)"/><rect y="37" width="90" height="14" fill="#8a6a08" opacity=".3"/><path d="M1 56l8-8 4-5 5-2 6.500000 2 4 13z" fill="#4a1828" opacity=".75" filter="url(#b1)"/></svg></div>
<span id="t36" class="txt " style="left:817.5px;top:221.0px;transform:scaleX(0.9051);">b_bg_1280x720_1</span>
<span id="t37" class="txt " style="left:847.5px;top:236.0px;">b.png</span>
<div class="th" style="left:929px;top:165px;width:90px;height:51px"><svg width="90" height="51" viewBox="0 0 90 51"><use href="#autumn"/><rect width="90" height="51" fill="#06040c" opacity=".76"/><rect y="36" width="90" height="15" fill="url(#a2b)" style="mix-blend-mode:screen"/></svg></div>
<span id="t38" class="txt " style="left:930.5px;top:221.0px;transform:scaleX(0.9051);">b_bg_1280x720_2</span>
<span id="t39" class="txt " style="left:960.5px;top:236.0px;">b.png</span>
<div class="th" style="left:251px;top:297px;width:90px;height:51px"><svg width="90" height="51" viewBox="0 0 90 51"><use href="#autumn"/><rect width="90" height="51" fill="#0a0a5c" style="mix-blend-mode:screen"/><rect width="90" height="51" fill="url(#a3w)"/><ellipse cx="4" cy="38" rx="7" ry="8" fill="#fff" opacity=".45" filter="url(#b2)"/></svg></div>
<span id="t40" class="txt " style="left:252.5px;top:353.0px;transform:scaleX(0.9051);">b_bg_1280x720_3</span>
<span id="t41" class="txt " style="left:282.5px;top:368.0px;">b.png</span>
<div class="th" style="left:364px;top:297px;width:90px;height:51px"><svg width="90" height="51" viewBox="0 0 90 51">
 <rect x="-5" y="-5" width="100" height="61" fill="#e6ebf0"/>
 <g filter="url(#b1)">
  <ellipse cx="40" cy="12" rx="14" ry="11" fill="#8cb488"/>
  <ellipse cx="33" cy="24" rx="8" ry="8" fill="#9cbc98"/>
  <path d="M36 25L62 4l28 15v18H36z" fill="#e6ebe6"/>
  <ellipse cx="62" cy="17" rx="14" ry="8" fill="#7eac7a"/>
  <ellipse cx="76" cy="23" rx="8" ry="6" fill="#a8c8a4"/>
  <ellipse cx="51" cy="19" rx="7" ry="7" fill="#6a9a64"/>
  <path d="M30 23.500000L62 1.500000l31 16.500000" stroke="#2c2622" stroke-width="3.400000" fill="none"/><path d="M33 23L46 14.500000L47 22L38 25z" fill="#2e2c26" opacity=".85"/>
  <ellipse cx="11" cy="18" rx="17" ry="25" fill="#2e6229"/>
  <ellipse cx="12" cy="5" rx="9" ry="6" fill="#5a8c54"/>
  <ellipse cx="21" cy="29" rx="10" ry="9" fill="#467e40"/>
  <ellipse cx="1" cy="32" rx="6" ry="14" fill="#1e5220"/>
  <ellipse cx="27" cy="32" rx="7" ry="5" fill="#7ea47c"/>
  <path d="M51 -5l3 0-5 22-2 20h-3.500000l2.500000-21z" fill="#3c3a30"/>
  <path d="M37 4l2-.5 6 22-2 .5z" fill="#4a4a3c"/>
  <rect x="43" y="27" width="38" height="10" fill="#2a3a20"/>
  <rect x="37" y="25.500000" width="4.500000" height="8" fill="#f6f8f6"/>
  <rect x="58" y="29" width="3.500000" height="5.500000" fill="#e8ece8"/>
  <rect x="70" y="28" width="5" height="7" fill="#e4e8e4"/>
  <rect x="66" y="30" width="4" height="5" fill="#6a3020"/>
  <rect x="80" y="26" width="6.500000" height="10.500000" fill="#fdfdfd"/>
  <rect x="87" y="22" width="5" height="14" fill="#ccd8cc"/>
  <ellipse cx="60" cy="34" rx="4" ry="3.500000" fill="#2a7a24"/>
  <ellipse cx="71" cy="36" rx="3" ry="2.500000" fill="#2f7a28"/>
  <ellipse cx="34" cy="36" rx="6" ry="3" fill="#3a8a30"/>
  <rect x="-5" y="37" width="100" height="20" fill="#42a81c"/>
  <ellipse cx="52" cy="43" rx="32" ry="5" fill="#5aba28"/>
  <ellipse cx="6" cy="47" rx="12" ry="7" fill="#2a821c"/>
  <path d="M10.500000 37.500000q-1.500000 3.500000 2.500000 6.500000 7 4 11 9" stroke="#ccd4c8" stroke-width="3" fill="none"/>
  <rect x="13.500000" y="33.500000" width="1.300000" height="3.500000" fill="#e8ece8"/>
 </g>
 <rect width="90" height="37" fill="#f4faf4" filter="url(#leaf)" opacity=".24"/>
 <rect width="90" height="37" fill="#1c3c18" filter="url(#leaf2)" opacity=".28"/>
 <rect y="38" width="90" height="13" fill="#d8e030" filter="url(#leaf2)" opacity=".25"/>
</svg></div>
<span id="t42" class="txt " style="left:366.0px;top:353.0px;transform:scaleX(0.9262);">bg01_1280x720.p</span>
<span id="t43" class="txt " style="left:403.5px;top:368.0px;transform:scaleX(1.0480);">ng</span>
<div class="th" style="left:477px;top:297px;width:90px;height:51px"><svg width="90" height="51" viewBox="0 0 90 51"><g filter="url(#b1)">
 <rect x="-5" y="-5" width="100" height="61" fill="#e6ebf0"/>
 <g filter="url(#b1)">
  <ellipse cx="40" cy="12" rx="14" ry="11" fill="#8cb488"/>
  <ellipse cx="33" cy="24" rx="8" ry="8" fill="#9cbc98"/>
  <path d="M36 25L62 4l28 15v18H36z" fill="#e6ebe6"/>
  <ellipse cx="62" cy="17" rx="14" ry="8" fill="#7eac7a"/>
  <ellipse cx="76" cy="23" rx="8" ry="6" fill="#a8c8a4"/>
  <ellipse cx="51" cy="19" rx="7" ry="7" fill="#6a9a64"/>
  <path d="M30 23.500000L62 1.500000l31 16.500000" stroke="#2c2622" stroke-width="3.400000" fill="none"/><path d="M33 23L46 14.500000L47 22L38 25z" fill="#2e2c26" opacity=".85"/>
  <ellipse cx="11" cy="18" rx="17" ry="25" fill="#2e6229"/>
  <ellipse cx="12" cy="5" rx="9" ry="6" fill="#5a8c54"/>
  <ellipse cx="21" cy="29" rx="10" ry="9" fill="#467e40"/>
  <ellipse cx="1" cy="32" rx="6" ry="14" fill="#1e5220"/>
  <ellipse cx="27" cy="32" rx="7" ry="5" fill="#7ea47c"/>
  <path d="M51 -5l3 0-5 22-2 20h-3.500000l2.500000-21z" fill="#3c3a30"/>
  <path d="M37 4l2-.5 6 22-2 .5z" fill="#4a4a3c"/>
  <rect x="43" y="27" width="38" height="10" fill="#2a3a20"/>
  <rect x="37" y="25.500000" width="4.500000" height="8" fill="#f6f8f6"/>
  <rect x="58" y="29" width="3.500000" height="5.500000" fill="#e8ece8"/>
  <rect x="70" y="28" width="5" height="7" fill="#e4e8e4"/>
  <rect x="66" y="30" width="4" height="5" fill="#6a3020"/>
  <rect x="80" y="26" width="6.500000" height="10.500000" fill="#fdfdfd"/>
  <rect x="87" y="22" width="5" height="14" fill="#ccd8cc"/>
  <ellipse cx="60" cy="34" rx="4" ry="3.500000" fill="#2a7a24"/>
  <ellipse cx="71" cy="36" rx="3" ry="2.500000" fill="#2f7a28"/>
  <ellipse cx="34" cy="36" rx="6" ry="3" fill="#3a8a30"/>
  <rect x="-5" y="37" width="100" height="20" fill="#42a81c"/>
  <ellipse cx="52" cy="43" rx="32" ry="5" fill="#5aba28"/>
  <ellipse cx="6" cy="47" rx="12" ry="7" fill="#2a821c"/>
  <path d="M10.500000 37.500000q-1.500000 3.500000 2.500000 6.500000 7 4 11 9" stroke="#ccd4c8" stroke-width="3" fill="none"/>
  <rect x="13.500000" y="33.500000" width="1.300000" height="3.500000" fill="#e8ece8"/>
 </g>
 <rect width="90" height="37" fill="#f4faf4" filter="url(#leaf)" opacity=".24"/>
 <rect width="90" height="37" fill="#1c3c18" filter="url(#leaf2)" opacity=".28"/>
 <rect y="38" width="90" height="13" fill="#d8e030" filter="url(#leaf2)" opacity=".25"/>
</g><rect width="90" height="51" fill="#18a030" opacity=".08"/><rect y="37.500000" width="90" height="14" fill="#40b820" opacity=".35"/><path d="M10.500000 37.500000q-1.500000 3.500000 2.500000 6.500000 7 4 11 9" stroke="#d4dcd0" stroke-width="2.400000" fill="none" filter="url(#b1)"/></svg></div>
<span id="t44" class="txt " style="left:479.5px;top:353.0px;transform:scaleX(0.9158);">bg01a_1280x720.</span>
<span id="t45" class="txt " style="left:513.0px;top:368.0px;transform:scaleX(1.0484);">png</span>
<div class="th" style="left:590px;top:297px;width:90px;height:51px"><svg width="90" height="51" viewBox="0 0 90 51">
 <rect x="-5" y="-5" width="100" height="61" fill="#46a228"/>
 <g filter="url(#b1)">
  <path d="M49 -5L96 -5L96 27L88 23z" fill="#fdfefd"/>
  <path d="M-5 3L8 1L14 8L6 13L-5 12z" fill="#e4f2e0"/>
  <path d="M20 11l9-2 1 5-9 2z" fill="#f4f8f4"/>
  <path d="M47 3L88 24L88 30L47 10L40 14L36 9z" fill="#6c8c60"/>
  <path d="M35 9.500000L47 2l42 22" stroke="#3a3024" stroke-width="3.400000" fill="none"/>
  <path d="M4 29L17 20.500000" stroke="#3a3024" stroke-width="3" fill="none"/>
  <ellipse cx="62" cy="10" rx="5" ry="3" fill="#46a228"/>
  <ellipse cx="70" cy="4" rx="3" ry="2" fill="#348c20" opacity=".7"/>
  <ellipse cx="79" cy="9" rx="2.500000" ry="2" fill="#bfe0b8"/>
  <ellipse cx="40" cy="28" rx="24" ry="16" fill="#348c20"/>
  <ellipse cx="40" cy="36" rx="30" ry="8" fill="#1c5010" opacity=".45"/>
  <rect x="8" y="30" width="18" height="2" fill="#8a9088"/>
  <rect x="9" y="24.500000" width="7.500000" height="5.500000" fill="#f4f6f4"/>
  <rect x="12.500000" y="35" width="6" height="7.500000" fill="#f4f6f4"/>
  <rect x="45.500000" y="16.500000" width="5.500000" height="6" fill="#f4f6f4" opacity=".75"/>
  <path d="M33 2l3.500000 1-7 19-2.500000 22h-4l3-24z" fill="#2c3c18"/>
  <path d="M18.500000 18l2 0 3 26h-3z" fill="#2c3c18" opacity=".75"/>
  <rect x="51" y="35.500000" width="8.500000" height="8" fill="#2c3c18"/>
  <rect x="36" y="19" width="9" height="2" fill="#2c3c18" opacity=".6"/>
  <rect x="66.500000" y="33" width="6.500000" height="13" fill="#2c3c18"/>
  <rect x="68" y="35.500000" width="3.500000" height="2" fill="#c8c020"/>
  <rect x="73.500000" y="34" width="6.500000" height="12.500000" fill="#ffffff"/>
  <rect x="60" y="38" width="3.500000" height="6" fill="#e4eee4"/>
  <rect x="80" y="23" width="12" height="24" fill="#d4ecd0"/>
  <rect x="76" y="22" width="4" height="10" fill="#e8f0e8" opacity=".8"/>
  <ellipse cx="82.500000" cy="40.500000" rx="2.800000" ry="4.500000" fill="#348c20"/>
  <ellipse cx="89" cy="30" rx="2" ry="5" fill="#46a228"/>
  <ellipse cx="48" cy="42.500000" rx="5" ry="4" fill="#348c20"/>
  <ellipse cx="10" cy="47" rx="16" ry="6" fill="#348c20"/>
  <rect x="20" y="47.500000" width="76" height="10" fill="#80ba30"/>
  <ellipse cx="76" cy="50" rx="18" ry="3" fill="#b4d870"/>
  <rect x="40" y="44" width="1.500000" height="5" fill="#203018"/>
 </g>
 <rect width="90" height="47" fill="#7ccc48" filter="url(#leaf)" opacity=".5"/>
 <rect width="90" height="47" fill="#1c5010" filter="url(#leaf2)" opacity=".5"/>
 <path d="M53 -5L96 -5L96 23L91 21.500000L51 0z" fill="#fdfefd" filter="url(#b1)"/>
 <path d="M36 9L47 2l42 22" stroke="#3a3024" stroke-width="3" fill="none" filter="url(#b1)" opacity=".85"/>
</svg></div>
<span id="t46" class="txt " style="left:592.0px;top:353.0px;transform:scaleX(0.9262);">bg02_1280x720.p</span>
<span id="t47" class="txt " style="left:629.5px;top:368.0px;transform:scaleX(1.0480);">ng</span>
<div class="th" style="left:703px;top:297px;width:90px;height:51px"><svg width="90" height="51" viewBox="0 0 90 51">
 <rect x="-5" y="-5" width="100" height="61" fill="#2eb41e"/>
 <g filter="url(#b1)">
  <path d="M49 -5L96 -5L96 27L88 23z" fill="#fdfefd"/>
  <path d="M-5 3L8 1L14 8L6 13L-5 12z" fill="#e4f2e0"/>
  <path d="M20 11l9-2 1 5-9 2z" fill="#f4f8f4"/>
  <path d="M47 3L88 24L88 30L47 10L40 14L36 9z" fill="#6a5a18"/>
  <path d="M35 9.500000L47 2l42 22" stroke="#704c10" stroke-width="3.400000" fill="none"/>
  <path d="M4 29L17 20.500000" stroke="#704c10" stroke-width="3" fill="none"/>
  <ellipse cx="62" cy="10" rx="5" ry="3" fill="#2eb41e"/>
  <ellipse cx="70" cy="4" rx="3" ry="2" fill="#20a018" opacity=".7"/>
  <ellipse cx="79" cy="9" rx="2.500000" ry="2" fill="#bfe0b8"/>
  <ellipse cx="40" cy="28" rx="24" ry="16" fill="#20a018"/>
  <ellipse cx="40" cy="36" rx="30" ry="8" fill="#4a4a08" opacity=".45"/>
  <rect x="8" y="30" width="18" height="2" fill="#8a9088"/>
  <rect x="9" y="24.500000" width="7.500000" height="5.500000" fill="#34a878"/>
  <rect x="12.500000" y="35" width="6" height="7.500000" fill="#34a878"/>
  <rect x="45.500000" y="16.500000" width="5.500000" height="6" fill="#34a878" opacity=".75"/>
  <path d="M33 2l3.500000 1-7 19-2.500000 22h-4l3-24z" fill="#604408"/>
  <path d="M18.500000 18l2 0 3 26h-3z" fill="#604408" opacity=".75"/>
  <rect x="51" y="35.500000" width="8.500000" height="8" fill="#604408"/>
  <rect x="36" y="19" width="9" height="2" fill="#604408" opacity=".6"/>
  <rect x="66.500000" y="33" width="6.500000" height="13" fill="#604408"/>
  <rect x="68" y="35.500000" width="3.500000" height="2" fill="#c8c020"/>
  <rect x="73.500000" y="34" width="6.500000" height="12.500000" fill="#ffffff"/>
  <rect x="60" y="38" width="3.500000" height="6" fill="#e4eee4"/>
  <rect x="80" y="23" width="12" height="24" fill="#d4ecd0"/>
  <rect x="76" y="22" width="4" height="10" fill="#e8f0e8" opacity=".8"/>
  <ellipse cx="82.500000" cy="40.500000" rx="2.800000" ry="4.500000" fill="#20a018"/>
  <ellipse cx="89" cy="30" rx="2" ry="5" fill="#2eb41e"/>
  <ellipse cx="48" cy="42.500000" rx="5" ry="4" fill="#20a018"/>
  <ellipse cx="10" cy="47" rx="16" ry="6" fill="#20a018"/>
  <rect x="20" y="47.500000" width="76" height="10" fill="#38d020"/>
  <ellipse cx="76" cy="50" rx="18" ry="3" fill="#90f060"/>
  <rect x="40" y="44" width="1.500000" height="5" fill="#203018"/>
 </g>
 <rect width="90" height="47" fill="#50e030" filter="url(#leaf)" opacity=".5"/>
 <rect width="90" height="47" fill="#4a4a08" filter="url(#leaf2)" opacity=".5"/>
 <path d="M53 -5L96 -5L96 23L91 21.500000L51 0z" fill="#fdfefd" filter="url(#b1)"/>
 <path d="M36 9L47 2l42 22" stroke="#704c10" stroke-width="3" fill="none" filter="url(#b1)" opacity=".85"/>
</svg></div>
<span id="t48" class="txt " style="left:705.5px;top:353.0px;transform:scaleX(0.9158);">bg02a_1280x720.</span>
<span id="t49" class="txt " style="left:739.0px;top:368.0px;transform:scaleX(1.0484);">png</span>
<div class="th" style="left:816px;top:297px;width:90px;height:51px"><svg width="90" height="51" viewBox="0 0 90 51">
 <defs><linearGradient id="sk0a3f88" x1="0" y1="0" x2="0.3" y2="1"><stop offset="0" stop-color="#0a3f88"/><stop offset="0.6" stop-color="#2f7cc4"/><stop offset="1" stop-color="#6aa4d8"/></linearGradient></defs>
 <rect x="-5" y="-5" width="100" height="40" fill="url(#sk0a3f88)"/>
 <g filter="url(#c3)" transform="translate(3,3)">
  <ellipse cx="62" cy="12" rx="27" ry="12" fill="#fbfcfe"/>
  <ellipse cx="42" cy="2" rx="18" ry="5" fill="#fbfcfe" opacity=".85"/>
  <ellipse cx="80" cy="1" rx="14" ry="6" fill="#fbfcfe"/>
  <ellipse cx="74" cy="27" rx="14" ry="1.600000" fill="#fbfcfe"/>
 </g>
 <g filter="url(#c2)" transform="translate(2,2)">
  <ellipse cx="1" cy="7" rx="3" ry="1.500000" fill="#fbfcfe" opacity=".8"/>
  <ellipse cx="33" cy="7" rx="5" ry="4" fill="#3c78b8" opacity=".75"/>
  <ellipse cx="48" cy="0" rx="6" ry="2.500000" fill="#3c78b8" opacity=".85"/>
  <ellipse cx="74" cy="7" rx="4" ry="3" fill="#3c78b8" opacity=".65"/>
  <ellipse cx="86" cy="4" rx="3.500000" ry="3" fill="#3c78b8" opacity=".75"/>
  <ellipse cx="54" cy="15" rx="3" ry="2" fill="#3c78b8" opacity=".65"/>
  <ellipse cx="60" cy="24" rx="13" ry="2.500000" fill="#3c78b8" opacity=".5"/>
 </g>
 <g filter="url(#b1)">
  <rect x="38" y="32.600000" width="57" height="1.800000" fill="#3a6c94"/>
  <path d="M-5 31.500000l25 1.500000 75 1v1H-5z" fill="#4a6648"/>
  <rect x="-5" y="34" width="100" height="22" fill="#b0c04c"/>
  <rect x="-5" y="34.500000" width="100" height="3.500000" fill="#d4d47c"/>
  <ellipse cx="66" cy="42" rx="24" ry="4" fill="#d4d47c" opacity=".5"/>
  <rect x="-5" y="46" width="100" height="10" fill="#94b83a" opacity=".6"/>
  <ellipse cx="19" cy="43.500000" rx="16" ry="2.800000" fill="#4c7c20"/>
  <path d="M26 31l3 5 1 7h3.500000l0.500000-7 3-6-3 1-2 3-2-4z" fill="#5c4434"/>
 </g>
 <g filter="url(#c2)" transform="translate(2,2)">
  <ellipse cx="29" cy="21" rx="14.500000" ry="10" fill="#34500e"/>
  <ellipse cx="23" cy="14" rx="6" ry="3.500000" fill="#34500e"/>
  <ellipse cx="24" cy="17" rx="7" ry="4" fill="#62821e"/>
  <ellipse cx="36" cy="16" rx="4" ry="2.500000" fill="#62821e" opacity=".8"/>
  <ellipse cx="32" cy="25" rx="5" ry="3" fill="#62821e" opacity=".5"/>
 </g>
</svg></div>
<span id="t50" class="txt " style="left:818.0px;top:353.0px;transform:scaleX(0.9262);">bg03_1280x720.p</span>
<span id="t51" class="txt " style="left:855.5px;top:368.0px;transform:scaleX(1.0480);">ng</span>
<div class="th" style="left:929px;top:297px;width:90px;height:51px"><svg width="90" height="51" viewBox="0 0 90 51">
 <defs><linearGradient id="sk0c9cb4" x1="0" y1="0" x2="0.3" y2="1"><stop offset="0" stop-color="#0c9cb4"/><stop offset="0.6" stop-color="#46b4c8"/><stop offset="1" stop-color="#b4e2ea"/></linearGradient></defs>
 <rect x="-5" y="-5" width="100" height="40" fill="url(#sk0c9cb4)"/>
 <g filter="url(#c3)" transform="translate(3,3)">
  <ellipse cx="62" cy="12" rx="27" ry="12" fill="#fbfffe"/>
  <ellipse cx="42" cy="2" rx="18" ry="5" fill="#fbfffe" opacity=".85"/>
  <ellipse cx="80" cy="1" rx="14" ry="6" fill="#fbfffe"/>
  <ellipse cx="74" cy="27" rx="14" ry="1.600000" fill="#fbfffe"/>
 </g>
 <g filter="url(#c2)" transform="translate(2,2)">
  <ellipse cx="1" cy="7" rx="3" ry="1.500000" fill="#fbfffe" opacity=".8"/>
  <ellipse cx="33" cy="7" rx="5" ry="4" fill="#3aaac0" opacity=".75"/>
  <ellipse cx="48" cy="0" rx="6" ry="2.500000" fill="#3aaac0" opacity=".85"/>
  <ellipse cx="74" cy="7" rx="4" ry="3" fill="#3aaac0" opacity=".65"/>
  <ellipse cx="86" cy="4" rx="3.500000" ry="3" fill="#3aaac0" opacity=".75"/>
  <ellipse cx="54" cy="15" rx="3" ry="2" fill="#3aaac0" opacity=".65"/>
  <ellipse cx="60" cy="24" rx="13" ry="2.500000" fill="#3aaac0" opacity=".5"/>
 </g>
 <g filter="url(#b1)">
  <rect x="38" y="32.600000" width="57" height="1.800000" fill="#30a0b8"/>
  <path d="M-5 31.500000l25 1.500000 75 1v1H-5z" fill="#4a8a40"/>
  <rect x="-5" y="34" width="100" height="22" fill="#c2dc52"/>
  <rect x="-5" y="34.500000" width="100" height="3.500000" fill="#e4f088"/>
  <ellipse cx="66" cy="42" rx="24" ry="4" fill="#e4f088" opacity=".5"/>
  <rect x="-5" y="46" width="100" height="10" fill="#b0d040" opacity=".6"/>
  <ellipse cx="19" cy="43.500000" rx="16" ry="2.800000" fill="#6c9a20"/>
  <path d="M26 31l3 5 1 7h3.500000l0.500000-7 3-6-3 1-2 3-2-4z" fill="#38500c"/>
 </g>
 <g filter="url(#c2)" transform="translate(2,2)">
  <ellipse cx="29" cy="21" rx="14.500000" ry="10" fill="#2a4208"/>
  <ellipse cx="23" cy="14" rx="6" ry="3.500000" fill="#2a4208"/>
  <ellipse cx="24" cy="17" rx="7" ry="4" fill="#587a10"/>
  <ellipse cx="36" cy="16" rx="4" ry="2.500000" fill="#587a10" opacity=".8"/>
  <ellipse cx="32" cy="25" rx="5" ry="3" fill="#587a10" opacity=".5"/>
 </g>
</svg></div>
<span id="t52" class="txt " style="left:931.5px;top:353.0px;transform:scaleX(0.9158);">bg03a_1280x720.</span>
<span id="t53" class="txt " style="left:965.0px;top:368.0px;transform:scaleX(1.0484);">png</span>
<div class="th" style="left:251px;top:458px;width:90px;height:22px"><svg width="90" height="22" viewBox="0 29 90 22"><defs>
<pattern id="chk" width="2" height="2" patternUnits="userSpaceOnUse"><rect width="2" height="2" fill="#006a30"/><rect width="1" height="1" fill="#002c14"/><rect x="1" y="1" width="1" height="1" fill="#002c14"/></pattern>
<pattern id="dot" width="5.6" height="4" patternUnits="userSpaceOnUse"><rect width="5.6" height="4" fill="#008a40"/><circle cx="1.4" cy="1" r=".7" fill="#20e050"/><circle cx="4.2" cy="3" r=".7" fill="#20e050"/></pattern>
<pattern id="zz" width="3" height="2" patternUnits="userSpaceOnUse"><rect width="3" height="2" fill="#f8a400"/><path d="M0 0l1.5 1L0 2z" fill="#e08810"/></pattern>
</defs>
<rect x="0" y="29" width="11.25" height="11" fill="#008a3a"/><path d="M0 34.5L5.6 29l5.6 5.5z" fill="#00dc3c"/><path d="M0 34.5v5.5h11.25v-5.5L5.6 40z" fill="#f8a800"/><path d="M0 34.5h11.25L5.6 40z" fill="#008a3a"/>
<rect x="0" y="40" width="11.25" height="11" fill="#28a8fa"/>
<rect x="11.25" y="29" width="11.25" height="11" fill="url(#chk)"/>
<rect x="11.25" y="40" width="11.25" height="11" fill="url(#dot)"/>
<rect x="22.5" y="29" width="22.5" height="11" fill="#28a8fa"/><path d="M22.8 29a11 11 0 0 0 22 0z" fill="url(#chk)"/>
<rect x="22.5" y="40" width="22.5" height="11" fill="url(#chk)"/><path d="M22.8 40a11 11 0 0 0 22 0z" fill="url(#dot)"/>
<rect x="45" y="29" width="11.25" height="11" fill="#00e234"/>
<rect x="56.25" y="29" width="22.5" height="11" fill="#008a3a"/><path d="M56.5 29a11 11 0 0 0 22 0z" fill="#00e234"/>
<rect x="45" y="40" width="11.25" height="11" fill="#c2c2c6"/>
<rect x="56.25" y="40" width="22.5" height="11" fill="#28a8fa"/><path d="M56.25 51L67.5 40l11.25 11z" fill="#c2c2c6"/>
<rect x="78.75" y="29" width="11.25" height="11" fill="#f8a400"/><rect x="78.75" y="29" width="1.4" height="22" fill="#b85c30"/><rect x="88.6" y="29" width="1.4" height="22" fill="#b85c30"/>
<rect x="80.15" y="40" width="8.45" height="11" fill="#8a2050"/>
<path d="M80.150000 29l1.500000 1-1.500000 1 1.500000 1-1.500000 1 1.500000 1-1.500000 1 1.500000 1-1.500000 1 1.500000 1-1.500000 1 1.500000 1-1.500000 1 1.500000 1-1.500000 1 1.500000 1-1.500000 1 1.500000 1-1.500000 1 1.500000 1-1.500000 1 1.500000 1-1.500000 1z" fill="#b85c30"/>
<path d="M88.600000 29l-1.500000 1 1.500000 1-1.500000 1 1.500000 1-1.500000 1 1.500000 1-1.500000 1 1.500000 1-1.500000 1 1.500000 1-1.500000 1 1.500000 1-1.500000 1 1.500000 1-1.500000 1 1.500000 1-1.500000 1 1.500000 1-1.500000 1 1.500000 1-1.500000 1 1.500000 1z" fill="#b85c30"/>
</svg></div>
<span id="t54" class="txt " style="left:266.7px;top:485.0px;transform:scaleX(1.0491);">bgchip.png</span>
<div class="th" style="left:364px;top:429px;width:90px;height:51px"><svg width="90" height="51" viewBox="0 0 90 51"><rect width="90" height="51" fill="#000"/></svg></div>
<span id="t55" class="txt " style="left:384.0px;top:485.0px;transform:scaleX(1.0316);">black.png</span>
<div class="th" style="left:477px;top:429px;width:90px;height:51px"><svg width="90" height="51" viewBox="0 0 90 51"><defs><linearGradient id="s2g" x1="0" y1="0" x2="0" y2="1"><stop offset="0" stop-color="#8c8680"/><stop offset="0.5" stop-color="#f4c88c"/><stop offset="0.62" stop-color="#f0bc78"/><stop offset="0.8" stop-color="#ecb066"/><stop offset="1" stop-color="#f2a23c"/></linearGradient>
<radialGradient id="sun"><stop offset="0" stop-color="#fffef4"/><stop offset="0.3" stop-color="#fff0bc"/><stop offset="0.6" stop-color="#f8c474" stop-opacity=".7"/><stop offset="1" stop-color="#e8a050" stop-opacity="0"/></radialGradient></defs>
<rect x="-5" y="-5" width="100" height="61" fill="url(#s2g)"/>
<g filter="url(#c3)" transform="translate(3,3)">
 <ellipse cx="28" cy="11" rx="38" ry="12.500000" fill="#30241e"/>
 <ellipse cx="6" cy="23" rx="17" ry="6.500000" fill="#3e2e26"/>
 <ellipse cx="62" cy="5" rx="11" ry="9" fill="#403028"/>
 <ellipse cx="78" cy="14" rx="14" ry="6.500000" fill="#4a3828"/>
</g>
<g filter="url(#c2)" transform="translate(2,2)">
 <ellipse cx="60" cy="18" rx="4" ry="4.500000" fill="#f8e0b4"/>
 <ellipse cx="82" cy="3" rx="9" ry="3.500000" fill="#ecc898"/>
 <ellipse cx="53" cy="3" rx="2.500000" ry="2.500000" fill="#c8a070"/>
 <ellipse cx="70" cy="10" rx="2.500000" ry="3" fill="#c49a6c"/>
 <ellipse cx="86" cy="16" rx="3" ry="2" fill="#d8b080"/>
 <ellipse cx="70" cy="17" rx="5" ry="4" fill="#46342a"/>
 <ellipse cx="78" cy="42" rx="11" ry="2.200000" fill="#bc9058"/>
 <ellipse cx="6" cy="38" rx="7" ry="1.300000" fill="#cc9a58" opacity=".7"/>
 <ellipse cx="50" cy="45" rx="12" ry="4" fill="#f4c890" opacity=".7"/>
</g>
<g filter="url(#b1)">
 <ellipse cx="68" cy="28" rx="25" ry="2" fill="#644a34"/>
 <ellipse cx="24" cy="30" rx="17" ry="1.600000" fill="#fce6b8"/>
 <ellipse cx="3" cy="0.500000" rx="7" ry="2.500000" fill="#8c8884"/>
 <ellipse cx="88" cy="0" rx="5" ry="2" fill="#9c9088"/>
</g>
<g stroke="#b08858" stroke-width="1.500000" opacity=".2" filter="url(#b1)"><path d="M45 23L18 0M45 23L32 -2M45 23L47 -2M45 23L60 0M45 23L74 8M45 23L4 14"/></g>
<circle cx="45" cy="23.500000" r="10" fill="url(#sun)"/>
<ellipse cx="45" cy="24.500000" rx="9" ry="2.500000" fill="#fff4d0" opacity=".75" filter="url(#b1)"/>
</svg></div>
<span id="t56" class="txt " style="left:480.2px;top:485.0px;transform:scaleX(0.9975);">freenaturestock-</span>
<span id="t57" class="txt " style="left:482.3px;top:500.0px;transform:scaleX(0.9215);">2_1280x720.png</span>
<div class="th" style="left:590px;top:429px;width:90px;height:51px"><svg width="90" height="51" viewBox="0 0 90 51"><defs><linearGradient id="s20g" x1="0" y1="0" x2="0" y2="1"><stop offset="0" stop-color="#d8c8a8"/><stop offset="0.5" stop-color="#e8d4ac"/><stop offset="1" stop-color="#f0dcaa"/></linearGradient></defs>
<rect x="-5" y="-5" width="100" height="61" fill="url(#s20g)"/>
<g filter="url(#c3)" transform="translate(3,3)">
 <ellipse cx="86" cy="4" rx="8" ry="9" fill="#bccad2"/>
 <ellipse cx="26" cy="13" rx="36" ry="6.500000" fill="#f4a848"/>
 <ellipse cx="22" cy="2" rx="36" ry="10" fill="#6c4418"/>
 <ellipse cx="66" cy="5" rx="13" ry="6" fill="#64462e"/>
 <ellipse cx="42" cy="29" rx="24" ry="5.500000" fill="#f4a43c"/>
 <ellipse cx="66" cy="22" rx="27" ry="9" fill="#54423e"/>
 <ellipse cx="2" cy="22" rx="12" ry="6" fill="#64503f"/>
</g>
<g filter="url(#c2)" transform="translate(2,2)">
 <ellipse cx="14" cy="0" rx="22" ry="4" fill="#4c2c10"/>
 <ellipse cx="46" cy="-1" rx="6" ry="1.500000" fill="#f0a030"/>
 <ellipse cx="12" cy="17" rx="10" ry="2.500000" fill="#f6b054"/>
 <ellipse cx="39" cy="19.500000" rx="6" ry="3" fill="#6c5444"/>
 <ellipse cx="30" cy="28" rx="5.500000" ry="2.800000" fill="#55402f"/>
 <ellipse cx="76" cy="25" rx="14" ry="6" fill="#4a3a38"/>
 <ellipse cx="88" cy="13" rx="3.500000" ry="5" fill="#7c6458"/>
 <ellipse cx="78" cy="39.500000" rx="10" ry="3" fill="#d08c50"/>
 <ellipse cx="84" cy="36" rx="7" ry="2.500000" fill="#705242"/>
 <ellipse cx="10" cy="45" rx="15" ry="3" fill="#ac946c"/>
 <ellipse cx="3" cy="39.500000" rx="6" ry="2" fill="#f0b878"/>
 <ellipse cx="62" cy="41" rx="4" ry="1.500000" fill="#ecbc84"/>
 <ellipse cx="24" cy="22" rx="8" ry="3.500000" fill="#e8d6b4"/>
</g>
</svg></div>
<span id="t58" class="txt " style="left:593.2px;top:485.0px;transform:scaleX(0.9975);">freenaturestock-</span>
<span id="t59" class="txt " style="left:591.3px;top:500.0px;transform:scaleX(0.9407);">20_1280x720.png</span>
<div class="th" style="left:703px;top:429px;width:90px;height:51px"><svg width="90" height="51" viewBox="0 0 90 51"><rect x="-5" y="-5" width="100" height="61" fill="#201e2c"/>
<g filter="url(#b3)">
 <path d="M33 -6L54 -6L59 24L56 57L37 57L42 26z" fill="#544e66"/>
 <ellipse cx="49.500000" cy="17" rx="4" ry="13" fill="#7e7692" opacity=".85"/>
 <ellipse cx="47" cy="47" rx="5" ry="7" fill="#2a2224"/>
 <ellipse cx="41" cy="36" rx="3" ry="7" fill="#262432"/>
 <ellipse cx="8" cy="30" rx="12" ry="22" fill="#1b1927"/>
 <ellipse cx="82" cy="30" rx="12" ry="22" fill="#1c1a28"/>
</g>
<rect width="90" height="51" filter="url(#stars)" opacity=".22"/>
<circle cx="77.500000" cy="30" r=".8" fill="#8898c8"/>
</svg></div>
<span id="t60" class="txt " style="left:706.2px;top:485.0px;transform:scaleX(0.9975);">freenaturestock-</span>
<span id="t61" class="txt " style="left:704.9px;top:500.0px;transform:scaleX(0.9293);">27_1280x720.png</span>
<div id="foot"></div>
<span id="t62" class="txt " style="left:130.0px;top:567.0px;transform:scaleX(0.7075);font-weight:500;"><span class="cj">ファイル名</span></span>
<span id="t63" class="txt " style="left:176.3px;top:567.0px;">(<u>N</u>):</span>
<div class="box" style="left:201px;top:562px;width:621px;height:24px;border:1.2px solid #6c92be;border-radius:3px"></div>
<div style="position:absolute;left:205px;top:566px;width:1px;height:16px;background:#000"></div>
<svg style="left:808.8px;top:572.0px" width="8.4" height="5.2" viewBox="0 0 8.4 5.2"><path d="M0.5 0.5L4.2 4.2L7.9 0.5" stroke="#5a5a5a" stroke-width="1.1" fill="none" stroke-linecap="round" stroke-linejoin="round"/></svg>
<div class="box" style="left:834px;top:563px;width:188px;height:22px;border-color:#d2d2d2;border-radius:3px;background:#fdfdfd"></div>
<span id="t64" class="txt " style="left:838.4px;top:567.0px;transform:scaleX(0.9767);">All files {*.*}</span>
<svg style="left:1008.8px;top:572.0px" width="8.4" height="5.2" viewBox="0 0 8.4 5.2"><path d="M0.5 0.5L4.2 4.2L7.9 0.5" stroke="#5a5a5a" stroke-width="1.1" fill="none" stroke-linecap="round" stroke-linejoin="round"/></svg>
<div class="btn" style="left:835px;top:592px;width:86px;height:24px;border:1.3px solid #0a6ac4"></div>
<div style="position:absolute;left:906px;top:595px;width:1.5px;height:18px;background:#4a4a4a"></div>
<svg style="left:909.0px;top:602.2px" width="9" height="5" viewBox="0 0 9 5"><path d="M0 0h9L4.5 5z" fill="#000"/></svg>
<span id="t65" class="txt " style="left:852.5px;top:597.0px;transform:scaleX(0.7611);font-weight:500;"><span class="cj">開く</span></span>
<span id="t66" class="txt " style="left:872.2px;top:597.0px;transform:scaleX(0.8649);">(<u>O</u>)</span>
<div class="btn" style="left:936px;top:592px;width:85px;height:24px"></div>
<span id="t67" class="txt " style="left:955.3px;top:597.0px;transform:scaleX(0.7014);font-weight:500;"><span class="cj">キャンセル</span></span>
<svg style="left:1028.0px;top:624.0px" width="10" height="10" viewBox="0 0 10 10"><rect x="6" y="0" width="2" height="2" fill="#b2b2b2"/><rect x="3" y="3" width="2" height="2" fill="#b2b2b2"/><rect x="6" y="3" width="2" height="2" fill="#b2b2b2"/><rect x="0" y="6" width="2" height="2" fill="#b2b2b2"/><rect x="3" y="6" width="2" height="2" fill="#b2b2b2"/><rect x="6" y="6" width="2" height="2" fill="#b2b2b2"/></svg>
</div>
</body>
</html>
